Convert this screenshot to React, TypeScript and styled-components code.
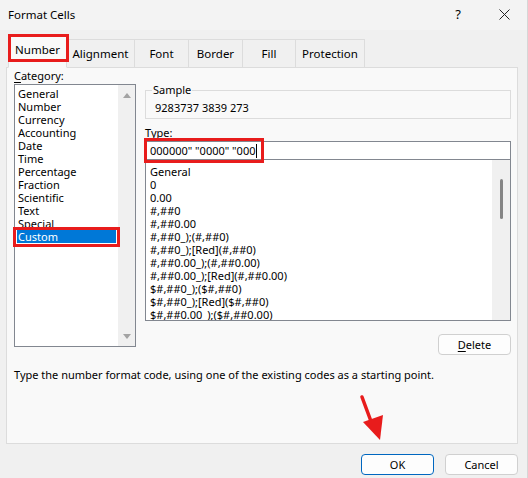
import styled, { createGlobalStyle } from "styled-components";

const Global = createGlobalStyle`
  html, body {
    margin: 0;
    padding: 0;
    background: #f0f0f0;
  }
  * {
    box-sizing: border-box;
  }
`;

const RED = "#e81c1c";

const Window = styled.div`
  position: relative;
  width: 528px;
  height: 478px;
  background: #f0f0f0;
  font-family: "Noto Sans", "Segoe UI", sans-serif;
  font-size: 11px;
  color: #000;
  border-right: 1px solid #d6d6d6;
  overflow: hidden;
`;

const TitleBar = styled.div`
  height: 30px;
  display: flex;
  align-items: center;
  padding: 0 0 2px 8px;
  background: #f3f3f3;
  font-size: 11.5px;
`;

const Title = styled.div`
  flex: 1;
`;

const TitleButton = styled.div`
  width: 46px;
  height: 28px;
  display: flex;
  align-items: center;
  justify-content: center;
  font-size: 13px;
`;

const Body = styled.div`
  padding: 0 9px 0 6px;
`;

const TabRow = styled.div`
  display: flex;
  align-items: flex-end;
  height: 37px;
  padding-left: 2px;
`;

const Tab = styled.div<{ $w: number; $active?: boolean; $mark?: boolean }>`
  position: relative;
  width: ${({ $w }) => $w}px;
  height: ${({ $active }) => ($active ? 33 : 29)}px;
  margin-bottom: -1px;
  display: flex;
  align-items: center;
  justify-content: center;
  padding-bottom: ${({ $active }) => ($active ? 4 : 0)}px;
  background: ${({ $active }) => ($active ? "#f9f9f9" : "#f0f0f0")};
  border: 1px solid #dcdcdc;
  border-bottom: ${({ $active }) => ($active ? "1px solid #f9f9f9" : "1px solid #dcdcdc")};
  border-left: ${({ $active }) => ($active ? "1px solid #dcdcdc" : "none")};
  z-index: ${({ $active }) => ($active ? 2 : 1)};
  font-size: 11.5px;

  ${({ $mark }) =>
    $mark &&
    `&::after {
      content: "";
      position: absolute;
      top: -2px;
      left: -1px;
      right: -3px;
      bottom: 5px;
      border: 3px solid ${RED};
    }`}
`;

const Panel = styled.div`
  position: relative;
  height: 377px;
  background: #f9f9f9;
  border: 1px solid #dcdcdc;
  padding: 0 6px 0 7px;
`;

const Columns = styled.div`
  display: grid;
  grid-template-columns: 122px 1fr;
  column-gap: 9px;
`;

const Column = styled.div`
  display: flex;
  flex-direction: column;
`;

const Label = styled.div`
  height: 16px;
  line-height: 16px;
  font-size: 11px;
`;

const Key = styled.span`
  text-decoration: underline;
  text-underline-offset: 2px;
`;

const CategoryBox = styled.div`
  height: 263px;
  background: #fff;
  border: 1px solid #828790;
  display: flex;
`;

const CategoryItems = styled.div`
  flex: 1;
  padding: 2px 2px 0 2px;
`;

const CatItem = styled.div<{ $selected?: boolean; $mark?: boolean }>`
  position: relative;
  height: 13px;
  line-height: 13px;
  padding-left: 1px;
  font-size: 11px;
  background: ${({ $selected }) => ($selected ? "#0078d7" : "transparent")};
  color: ${({ $selected }) => ($selected ? "#fff" : "#000")};

  ${({ $mark }) =>
    $mark &&
    `&::after {
      content: "";
      position: absolute;
      top: -3px;
      left: -4px;
      right: -4px;
      bottom: -4px;
      border: 3px solid ${RED};
    }`}
`;

const ArrowBar = styled.div`
  width: 17px;
  background: #f0f0f0;
  display: flex;
  flex-direction: column;
  justify-content: space-between;
  align-items: center;
  padding: 8px 0 7px;
`;

const Triangle = styled.div<{ $down?: boolean }>`
  width: 0;
  height: 0;
  border-left: 4px solid transparent;
  border-right: 4px solid transparent;
  ${({ $down }) =>
    $down ? "border-top: 5px solid #a3a3a3;" : "border-bottom: 5px solid #a3a3a3;"}
`;

const SampleGroup = styled.fieldset`
  margin: 14px 0 0;
  padding: 2px 8px 2px 9px;
  border: 1px solid #dcdcdc;
  min-width: 0;
`;

const Legend = styled.legend`
  padding: 0 1px;
  margin-left: -3px;
  line-height: 16px;
  font-size: 11px;
`;

const SampleValue = styled.div`
  height: 16px;
  line-height: 16px;
  font-size: 11px;
`;

const TypeLabel = styled(Label)`
  margin-top: 6px;
`;

const InputWrap = styled.div`
  position: relative;
  height: 19px;
  background: #fff;
  border: 1px solid #828790;
  display: flex;
  align-items: center;
  padding-left: 4px;
  font-size: 11px;
`;

const Caret = styled.span`
  display: inline-block;
  width: 1px;
  height: 14px;
  background: #000;
  margin-left: 1px;
`;

const Annotation = styled.div`
  position: absolute;
  left: -2px;
  top: -4px;
  width: 120px;
  height: 25px;
  border: 3px solid ${RED};
`;

const FormatBox = styled.div`
  height: 161px;
  background: #fff;
  border: 1px solid #828790;
  border-top: none;
  display: flex;
  overflow: hidden;
`;

const FormatItems = styled.div`
  flex: 1;
  padding: 5px 0 0 4px;
`;

const FormatItem = styled.div`
  height: 13px;
  line-height: 13px;
  font-size: 11px;
  white-space: nowrap;
`;

const ScrollTrack = styled.div`
  width: 18px;
  background: #f0f0f0;
  display: flex;
  justify-content: center;
  padding-top: 19px;
`;

const Thumb = styled.div`
  width: 3px;
  height: 40px;
  background: #858585;
  border-radius: 2px;
`;

const ButtonRow = styled.div`
  display: flex;
  justify-content: flex-end;
  gap: 11px;
`;

const Button = styled.div<{ $primary?: boolean }>`
  width: 73px;
  height: 21px;
  display: flex;
  align-items: center;
  justify-content: center;
  background: #fdfdfd;
  border: 1px solid ${({ $primary }) => ($primary ? "#0067c0" : "#d0d0d0")};
  border-radius: 4px;
  font-size: 11px;
`;

const DeleteRow = styled(ButtonRow)`
  margin-top: 13px;
`;

const Hint = styled.div`
  margin-top: 12px;
  line-height: 16px;
  font-size: 11px;
`;

const Footer = styled(ButtonRow)`
  padding-top: 10px;
`;

const ArrowMark = styled.svg`
  position: absolute;
  left: 352px;
  top: 392px;
`;

const tabs = [
  { label: "Number", w: 59 },
  { label: "Alignment", w: 68 },
  { label: "Font", w: 54 },
  { label: "Border", w: 54 },
  { label: "Fill", w: 53 },
  { label: "Protection", w: 69 },
];

const categories = [
  "General",
  "Number",
  "Currency",
  "Accounting",
  "Date",
  "Time",
  "Percentage",
  "Fraction",
  "Scientific",
  "Text",
  "Special",
  "Custom",
];

const formats = [
  "General",
  "0",
  "0.00",
  "#,##0",
  "#,##0.00",
  "#,##0_);(#,##0)",
  "#,##0_);[Red](#,##0)",
  "#,##0.00_);(#,##0.00)",
  "#,##0.00_);[Red](#,##0.00)",
  "$#,##0_);($#,##0)",
  "$#,##0_);[Red]($#,##0)",
  "$#,##0.00_);($#,##0.00)",
];

export default function App() {
  return (
    <>
      <Global />
      <Window>
        <TitleBar>
          <Title>Format Cells</Title>
          <TitleButton>?</TitleButton>
          <TitleButton>
            <svg width="11" height="11" viewBox="0 0 11 11">
              <path d="M0.5 0.5 L10.5 10.5 M10.5 0.5 L0.5 10.5" stroke="#222" strokeWidth="1" />
            </svg>
          </TitleButton>
        </TitleBar>

        <Body>
          <TabRow>
            {tabs.map((t, i) => (
              <Tab key={t.label} $w={t.w} $active={i === 0} $mark={i === 0}>
                {t.label}
              </Tab>
            ))}
          </TabRow>

          <Panel>
            <Columns>
              <Column>
                <Label>
                  <Key>C</Key>ategory:
                </Label>
                <CategoryBox>
                  <CategoryItems>
                    {categories.map((c) => (
                      <CatItem key={c} $selected={c === "Custom"} $mark={c === "Custom"}>
                        {c}
                      </CatItem>
                    ))}
                  </CategoryItems>
                  <ArrowBar>
                    <Triangle />
                    <Triangle $down />
                  </ArrowBar>
                </CategoryBox>
              </Column>

              <Column>
                <SampleGroup>
                  <Legend>Sample</Legend>
                  <SampleValue>9283737 3839 273</SampleValue>
                </SampleGroup>

                <TypeLabel>
                  <Key>T</Key>ype:
                </TypeLabel>
                <InputWrap>
                  000000" "0000" "000
                  <Caret />
                  <Annotation />
                </InputWrap>
                <FormatBox>
                  <FormatItems>
                    {formats.map((f) => (
                      <FormatItem key={f}>{f}</FormatItem>
                    ))}
                  </FormatItems>
                  <ScrollTrack>
                    <Thumb />
                  </ScrollTrack>
                </FormatBox>

                <DeleteRow>
                  <Button>
                    <Key>D</Key>elete
                  </Button>
                </DeleteRow>
              </Column>
            </Columns>

            <Hint>Type the number format code, using one of the existing codes as a starting point.</Hint>
          </Panel>

          <Footer>
            <Button $primary>OK</Button>
            <Button>Cancel</Button>
          </Footer>
        </Body>

        <ArrowMark width="34" height="52" viewBox="0 0 34 52">
          <path d="M10 5 L20 32" stroke={RED} strokeWidth="3.5" strokeLinecap="round" />
          <path d="M11 30 L31 23 L28 48 Z" fill={RED} />
        </ArrowMark>
      </Window>
    </>
  );
}
